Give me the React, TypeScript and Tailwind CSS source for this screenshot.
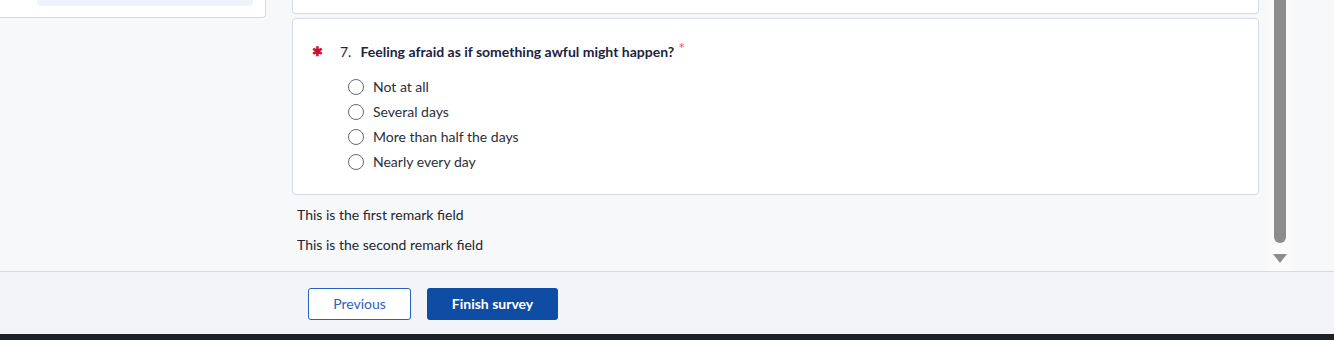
import React from "react";

const options = ["Not at all", "Several days", "More than half the days", "Nearly every day"];

export default function App() {
  return (
    <div
      className="w-[1334px] h-[340px] flex flex-col overflow-hidden bg-[#f7f8fa]"
      style={{ fontFamily: "Lato, 'Noto Sans', sans-serif" }}
    >
      <div className="h-[271px] flex flex-row overflow-hidden bg-[#f7f8fa]">
        {/* left column */}
        <div className="w-[266px] shrink-0">
          <div className="h-[18px] bg-white border-r border-b border-[#d4d9e3] rounded-br-[4px] flex">
            <div className="ml-[37px] w-[216px] h-[6px] bg-[#eef2fa] rounded-b-[4px]" />
          </div>
        </div>
        {/* main column */}
        <div className="ml-[26px] w-[967px] shrink-0 flex flex-col">
          <div className="h-[14px] bg-white border-l border-r border-b border-[#d4d9e3] rounded-b-[4px]" />
          <div className="mt-[4px] h-[177px] bg-white border border-[#d4d9e3] rounded-[4px] pt-[23px]">
            <div className="flex items-center h-[18px] text-[14px]">
              <span className="ml-[19px] w-[9px] text-[#c8102e] text-[13px] font-bold leading-none">✱</span>
              <span className="ml-[19px] text-[#1b2440]">7.</span>
              <span className="ml-[9px] font-bold text-[#1b2440]">Feeling afraid as if something awful might happen?</span>
              <span className="ml-[4px] mt-[-2px] text-[#e8556d] text-[16px] self-start leading-none">*</span>
            </div>
            <div className="mt-[14px] ml-[55px] flex flex-col">
              {options.map((o) => (
                <label key={o} className="flex items-center h-[25px]">
                  <span className="w-[16px] h-[16px] rounded-full border border-[#646a78] bg-white" />
                  <span className="ml-[9px] text-[14px] text-[#2a2f3a]">{o}</span>
                </label>
              ))}
            </div>
          </div>
          <div className="ml-[5px] mt-[10px] text-[14px] text-[#22262e] leading-[20px]">This is the first remark field</div>
          <div className="ml-[5px] mt-[10px] text-[14px] text-[#22262e] leading-[20px]">This is the second remark field</div>
        </div>
        {/* scrollbar */}
        <div className="ml-[9px] w-[24px] h-full bg-[#fafafa] flex flex-col items-center">
          <div className="w-[12px] h-[243px] bg-[#8c8c8c] rounded-b-[6px]" />
          <svg width="14" height="10" viewBox="0 0 14 10" className="mt-[11px]">
            <path d="M0 0 H14 L7 9 Z" fill="#8c8c8c" />
          </svg>
        </div>
      </div>
      <div className="h-[63px] border-t border-[#d6d9e1] bg-[#f3f4f7] flex items-start pt-[16px]">
        <button className="ml-[308px] w-[103px] h-[32px] pb-[2px] border border-[#2462c5] rounded-[3px] bg-white text-[#2c5fbf] text-[14px]">
          Previous
        </button>
        <button className="ml-[16px] w-[131px] h-[32px] pb-[2px] rounded-[3px] bg-[#0f4ca3] text-white text-[14px] font-bold">
          Finish survey
        </button>
      </div>
      <div className="h-[6px] bg-[#1d2128]" />
    </div>
  );
}
